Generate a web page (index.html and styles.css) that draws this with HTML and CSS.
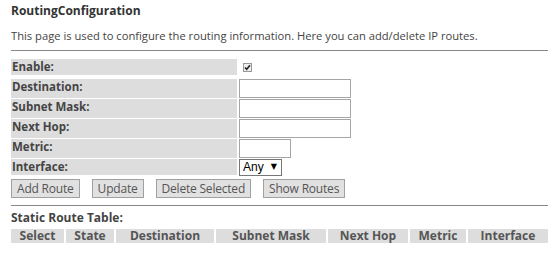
FILE: index.html
```html
<!DOCTYPE html>
<html lang="en">
<head>
  <meta charset="UTF-8" />
  <title>Routing Configuration</title>
  <link rel="stylesheet" href="styles.css">
</head>
<body>
  <div class="page">
    <h2 class="title">RoutingConfiguration</h2>
    <p class="intro">This page is used to configure the routing information. Here you can add/delete IP routes.</p>
    <hr class="rule" />

    <!-- route form -->
    <div class="form">
      <label class="field-label row-short">Enable:</label>
      <div class="field row-short">
        <span class="check">
          <svg width="9" height="9" viewBox="0 0 9 9"><rect x="0.5" y="0.5" width="8" height="8" fill="#eee" stroke="#999"/><path d="M2 4.5 L3.7 6.3 L7 2.3" fill="none" stroke="#222" stroke-width="1.6"/></svg>
        </span>
      </div>
      <label class="field-label">Destination:</label>
      <div class="field"><input type="text" class="text-input" /></div>
      <label class="field-label">Subnet Mask:</label>
      <div class="field"><input type="text" class="text-input" /></div>
      <label class="field-label">Next Hop:</label>
      <div class="field"><input type="text" class="text-input" /></div>
      <label class="field-label">Metric:</label>
      <div class="field"><input type="text" class="text-input small" /></div>
      <label class="field-label row-short">Interface:</label>
      <div class="field row-short">
        <span class="select-wrap">
          <select class="select">
            <option>Any</option>
          </select>
        </span>
      </div>
    </div>

    <div class="buttons">
      <button class="btn">Add Route</button>
      <button class="btn">Update</button>
      <button class="btn">Delete Selected</button>
      <button class="btn">Show Routes</button>
    </div>

    <hr class="rule rule-second" />

    <h3 class="subtitle">Static Route Table:</h3>
    <div class="route-table">
      <div class="th col-select">Select</div>
      <div class="th col-state">State</div>
      <div class="th col-dest">Destination</div>
      <div class="th col-mask">Subnet Mask</div>
      <div class="th col-hop">Next Hop</div>
      <div class="th col-metric">Metric</div>
      <div class="th col-iface">Interface</div>
    </div>
  </div>
</body>
</html>
```

FILE: styles.css
```css
body {
  margin: 0;
  background: #fff;
  font-family: "Open Sans", "Liberation Sans", sans-serif;
  font-size: 11px;
  color: #444;
}
.page {
  padding: 3px 1px 0 11px;
}
.title {
  margin: 0;
  font-size: 12px;
  line-height: 16px;
  font-weight: bold;
  color: #333;
}
.intro {
  margin: 9px 0 0;
  font-size: 11.2px;
  line-height: 16px;
  color: #444;
}
.rule {
  margin: 6px 0 0;
  border: none;
  border-top: 1px solid #888;
  height: 0;
}
.form {
  margin-top: 8px;
  display: grid;
  grid-template-columns: 226px auto;
  grid-auto-rows: 19px;
  column-gap: 2px;
  row-gap: 1px;
}
.form .row-short {
  height: 16px;
}
.field-label {
  background: #ddd;
  font-size: 11.5px;
  font-weight: bold;
  color: #444;
  line-height: 16px;
  padding-left: 1px;
}
.field {
  display: flex;
  align-items: flex-start;
}
.check {
  display: inline-block;
  margin: 4px 0 0 4px;
  line-height: 0;
}
.text-input {
  box-sizing: border-box;
  width: 112px;
  height: 19px;
  margin: 0;
  border: 1px solid #a5a5a5;
  padding: 0 2px;
  font: inherit;
}
.text-input.small {
  width: 52px;
}
.select-wrap {
  position: relative;
  display: inline-block;
}
.select {
  appearance: none;
  box-sizing: border-box;
  width: 43px;
  height: 17px;
  margin: 0;
  border: 1px solid #777;
  border-radius: 0;
  background: #fff;
  padding: 0 0 0 3px;
  font-family: "Liberation Sans", sans-serif;
  font-size: 12px;
  line-height: 15px;
  color: #000;
}
.select-wrap::after {
  content: "\25BC";
  position: absolute;
  right: 5px;
  top: 3px;
  font-family: "DejaVu Sans", sans-serif;
  font-size: 8px;
  color: #000;
  pointer-events: none;
}
.buttons {
  display: flex;
  gap: 12px;
  margin-top: 1px;
}
.btn {
  box-sizing: border-box;
  height: 19px;
  margin: 0;
  padding: 0 5px;
  border: 1px solid #a0a0a0;
  background: #e1e1e1;
  color: #555;
  font: inherit;
  font-size: 12px;
  letter-spacing: -0.2px;
  line-height: 17px;
}
.rule-second {
  margin-top: 7px;
}
.subtitle {
  margin: 5px 0 0;
  font-size: 12px;
  line-height: 14px;
  font-weight: bold;
  color: #444;
}
.route-table {
  margin-top: 4px;
  display: grid;
  grid-template-columns: 53px 48px 98px 110px 80px 56px 80px;
  column-gap: 2px;
}
.th {
  background: #ddd;
  height: 14px;
  line-height: 14px;
  font-size: 12px;
  font-weight: bold;
  color: #555;
  text-align: center;
}
```
